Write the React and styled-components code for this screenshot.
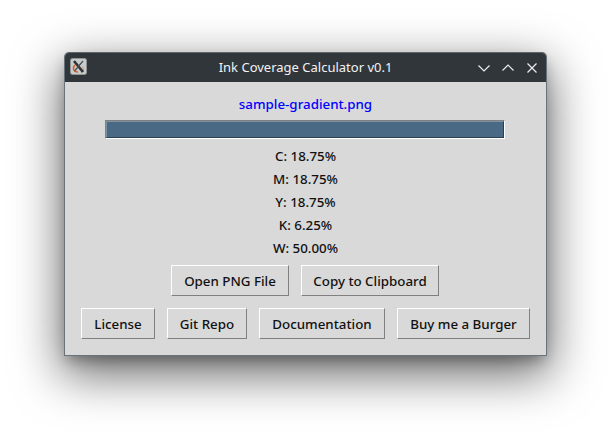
import React from "react";
import styled, { createGlobalStyle } from "styled-components";

const Global = createGlobalStyle`
  html, body { margin: 0; padding: 0; background: #ffffff; }
  body { width: 611px; height: 432px; overflow: hidden; }
`;

const Desktop = styled.div`
  width: 611px;
  height: 432px;
  padding: 52px 64px 0 64px;
  box-sizing: border-box;
  font-family: "Noto Sans", sans-serif;
`;

const Window = styled.div`
  width: 483px;
  height: 304px;
  box-sizing: border-box;
  display: flex;
  flex-direction: column;
  background: #d9d9d9;
  border: 1px solid #68737b;
  border-top-color: #5d666c;
  border-radius: 5px 5px 0 0;
  box-shadow: 0 7px 14px -3px rgba(0, 0, 0, 0.3), 0 16px 48px 3px rgba(0, 0, 0, 0.58);
`;

const TitleBar = styled.div`
  height: 29px;
  flex: none;
  display: flex;
  align-items: center;
  background: #31363b;
  border-radius: 4px 4px 0 0;
  padding: 0 8px 0 5px;
  position: relative;
`;

const Title = styled.div`
  position: absolute;
  left: 0;
  right: 0;
  top: 5px;
  text-align: center;
  color: #f2f3f3;
  font-size: 13px;
  line-height: 18px;
`;

const AppIcon = styled.svg`
  width: 17px;
  height: 17px;
  flex: none;
  margin-bottom: 2px;
`;

const Controls = styled.div`
  margin-left: auto;
  display: flex;
  gap: 12px;
  align-items: center;
`;

const ControlIcon = styled.svg`
  width: 12px;
  height: 12px;
  display: block;
  fill: none;
  stroke: #eceeef;
  stroke-width: 1.2;
`;

const Body = styled.div`
  flex: 1;
  display: flex;
  flex-direction: column;
  align-items: center;
  padding-top: 11px;
`;

const FileName = styled.div`
  color: #0000ff;
  font-size: 13.33px;
  font-weight: 500;
  line-height: 23px;
  height: 23px;
`;

const ProgressTrack = styled.div`
  width: 400px;
  height: 19px;
  margin: 4px 1px 6px 0;
  box-sizing: border-box;
  background: #4a6984;
  border: 1px solid;
  border-color: #808080 #ffffff #ffffff #808080;
`;

const ProgressFill = styled.div`
  width: 100%;
  height: 100%;
  box-sizing: border-box;
  background: #4a6984;
  border: 1px solid;
  border-color: #7f93a5 #2b3f50 #2b3f50 #7f93a5;
`;

const Stat = styled.div`
  color: #111111;
  font-size: 13.33px;
  font-weight: 500;
  line-height: 23px;
  height: 23px;
`;

const ButtonRow = styled.div`
  display: flex;
  justify-content: center;
  gap: 12px;
  margin-top: ${(p) => p.$top}px;
  margin-right: ${(p) => p.$shift || 0}px;
`;

const Button = styled.button`
  width: ${(p) => p.$w}px;
  height: 31px;
  padding: 0;
  box-sizing: border-box;
  background: #d9d9d9;
  border: 1px solid;
  border-color: #ffffff #808080 #808080 #ffffff;
  color: #111111;
  font-family: "Noto Sans", sans-serif;
  font-size: 13.33px;
  font-weight: 500;
  line-height: 18px;
`;

const stats = ["C: 18.75%", "M: 18.75%", "Y: 18.75%", "K: 6.25%", "W: 50.00%"];

export default function App() {
  return (
    <>
      <Global />
      <Desktop>
        <Window>
          <TitleBar>
            <AppIcon viewBox="0 0 17 17">
              <rect x="0.5" y="0.5" width="16" height="16" rx="2" fill="#c9cbcb" stroke="#8f9497" />
              <path d="M5 7 C2 10 3.5 14.5 8 14" fill="none" stroke="#d9602c" strokeWidth="1.5" />
              <path d="M12.5 8.5 C14.5 11 13.5 13.5 11 14.5" fill="none" stroke="#d8a25c" strokeWidth="1.2" />
              <path d="M4 3 L13 14" stroke="#2f3336" strokeWidth="2.6" />
              <path d="M13 3 L4.5 13" stroke="#4d5256" strokeWidth="1.3" />
            </AppIcon>
            <Title>Ink Coverage Calculator v0.1</Title>
            <Controls>
              <ControlIcon viewBox="0 0 12 12">
                <path d="M0.5 3.5 L6 9 L11.5 3.5" />
              </ControlIcon>
              <ControlIcon viewBox="0 0 12 12">
                <path d="M0.5 8.5 L6 3 L11.5 8.5" />
              </ControlIcon>
              <ControlIcon viewBox="0 0 12 12">
                <path d="M1.5 1.5 L10.5 10.5 M10.5 1.5 L1.5 10.5" />
              </ControlIcon>
            </Controls>
          </TitleBar>
          <Body>
            <FileName>sample-gradient.png</FileName>
            <ProgressTrack>
              <ProgressFill />
            </ProgressTrack>
            {stats.map((s) => (
              <Stat key={s}>{s}</Stat>
            ))}
            <ButtonRow $top={5} $shift={1}>
              <Button $w={118}>Open PNG File</Button>
              <Button $w={138}>Copy to Clipboard</Button>
            </ButtonRow>
            <ButtonRow $top={12}>
              <Button $w={74}>License</Button>
              <Button $w={80}>Git Repo</Button>
              <Button $w={126}>Documentation</Button>
              <Button $w={133}>Buy me a Burger</Button>
            </ButtonRow>
          </Body>
        </Window>
      </Desktop>
    </>
  );
}
